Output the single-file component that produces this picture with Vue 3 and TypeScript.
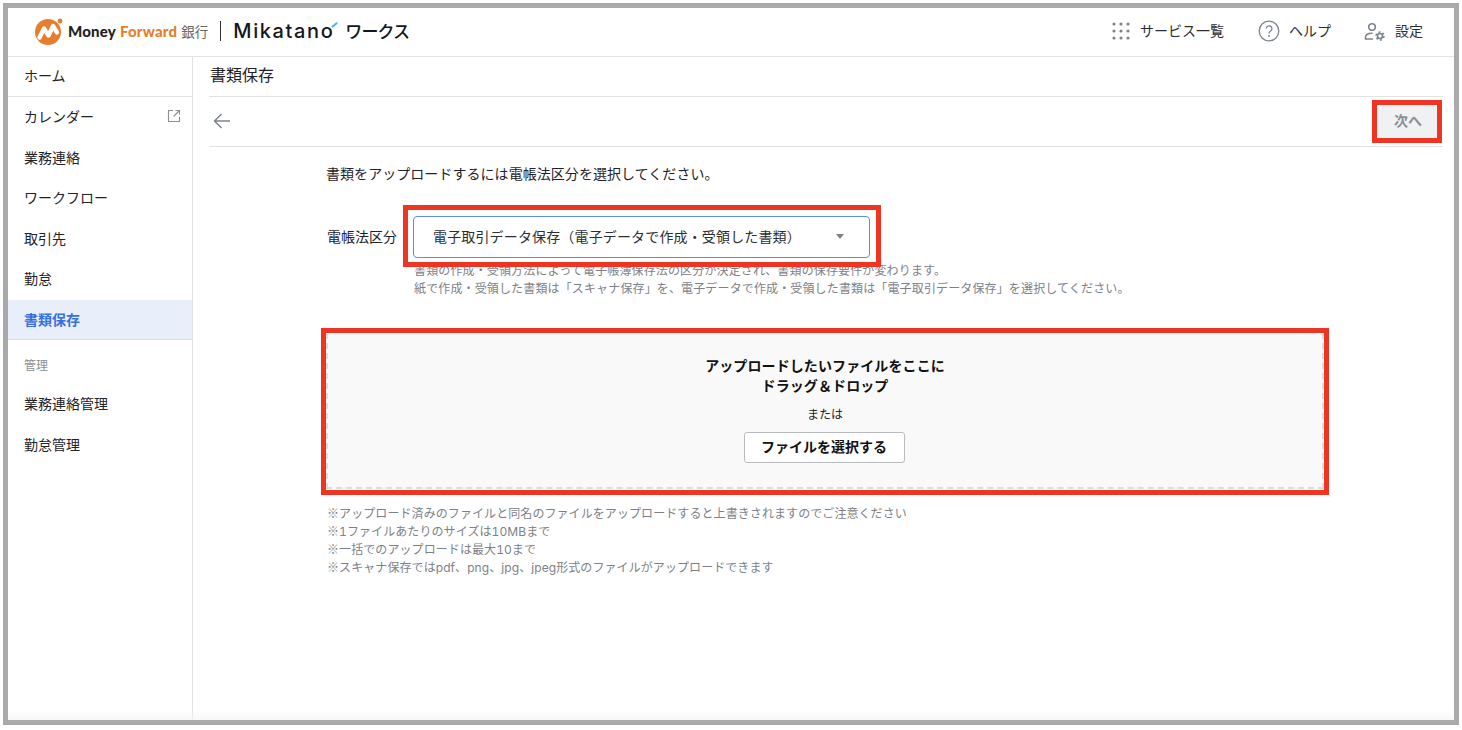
<script setup lang="ts">
interface NavItem { label: string; active?: boolean; external?: boolean }
const primary: NavItem[] = [
  { label: 'カレンダー', external: true },
  { label: '業務連絡' },
  { label: 'ワークフロー' },
  { label: '取引先' },
  { label: '勤怠' },
  { label: '書類保存', active: true },
]
const admin: NavItem[] = [{ label: '業務連絡管理' }, { label: '勤怠管理' }]
const notes: string[] = [
  'アップロード済みのファイルと同名のファイルをアップロードすると上書きされますのでご注意ください',
  '1ファイルあたりのサイズは10MBまで',
  '一括でのアップロードは最大10まで',
  'スキャナ保存ではpdf、png、jpg、jpeg形式のファイルがアップロードできます',
]
const dots: number[][] = [0, 1, 2].flatMap((r) => [0, 1, 2].map((c) => [c, r]))
</script>

<template>
  <div class="frame">
    <header class="header">
      <div class="brand">
        <svg class="mf-mark" width="30" height="28" viewBox="0 0 30 28">
          <circle cx="14" cy="15" r="13" fill="#e87d2e" />
          <circle cx="26" cy="4" r="2.4" fill="#e87d2e" />
          <path d="M5.500 20.500 L10 11.500 L14.500 18.500 L19 9 L23 15.500" fill="none" stroke="#fff" stroke-width="4.400" stroke-linejoin="round" stroke-linecap="round" />
        </svg>
        <span class="mf-money">Money</span>
        <span class="mf-forward">Forward</span>
        <span class="mf-bank">銀行</span>
        <span class="divider"></span>
        <span class="mikatano">Mikatano<i class="tick"></i></span>
        <span class="works">ワークス</span>
      </div>
      <nav class="tools">
        <a class="tool tool-services">
          <svg class="ico-services" width="18" height="18" viewBox="0 0 18 18">
            <circle v-for="d in dots" :key="d.join()" :cx="2 + d[0] * 7" :cy="2 + d[1] * 7" r="1.6" fill="#7d848c" />
          </svg>
          <span>サービス一覧</span>
        </a>
        <a class="tool tool-help">
          <svg class="ico-help" width="22" height="22" viewBox="0 0 22 22">
            <circle cx="11" cy="11" r="9.800" fill="none" stroke="#7d848c" stroke-width="1.300" />
            <path d="M8.300 8.600a2.800 2.800 0 1 1 4.300 2.400c-1 .7-1.600 1.200-1.600 2.400" fill="none" stroke="#7d848c" stroke-width="1.300" />
            <circle cx="11" cy="16" r=".9" fill="#7d848c" />
          </svg>
          <span>ヘルプ</span>
        </a>
        <a class="tool tool-settings">
          <svg width="22" height="20" viewBox="0 0 22 20">
            <circle cx="8" cy="5" r="3.300" fill="none" stroke="#7d848c" stroke-width="1.600" />
            <path d="M1.500 17v-1.500c0-2.800 3-4.300 6.500-4.300M1.500 17h7" fill="none" stroke="#7d848c" stroke-width="1.600" stroke-linecap="round" />
            <circle cx="16" cy="14" r="2.500" fill="none" stroke="#7d848c" stroke-width="1.700" />
            <circle cx="16" cy="14" r="4" fill="none" stroke="#7d848c" stroke-width="1.400" stroke-dasharray="2.100 2.090" />
          </svg>
          <span>設定</span>
        </a>
      </nav>
    </header>

    <div class="body">
      <aside class="sidebar">
        <div class="home">ホーム</div>
        <ul class="nav">
          <li v-for="item in primary" :key="item.label" class="nav-item" :class="{ active: item.active }">
            <span>{{ item.label }}</span>
            <svg v-if="item.external" width="14" height="14" viewBox="0 0 14 14" class="ext">
              <path d="M6 1.500H1.500V12.500H12.500V8M8.500 1.500H12.500V5.500M12.500 1.500L6.500 7.500" fill="none" stroke="#8a9097" stroke-width="1.100" />
            </svg>
          </li>
        </ul>
        <div class="nav-head">管理</div>
        <ul class="nav">
          <li v-for="item in admin" :key="item.label" class="nav-item">{{ item.label }}</li>
        </ul>
      </aside>

      <main class="main">
        <h1 class="title">書類保存</h1>
        <div class="toolbar">
          <svg width="18" height="16" viewBox="0 0 18 16" class="back">
            <path d="M17 8H1.500M8.500 1L1.500 8L8.500 15" fill="none" stroke="#7d848c" stroke-width="1.500" />
          </svg>
          <div class="next-mark"><button class="next" type="button">次へ</button></div>
        </div>

        <section class="content">
          <p class="lead">書類をアップロードするには電帳法区分を選択してください。</p>
          <div class="field">
            <label class="field-label">電帳法区分</label>
            <div class="select-mark">
              <div class="select">
                <span>電子取引データ保存（電子データで作成・受領した書類）</span>
                <i class="caret"></i>
              </div>
            </div>
          </div>
          <p class="help">
            書類の作成・受領方法によって電子帳簿保存法の区分が決定され、書類の保存要件が変わります。<br />
            紙で作成・受領した書類は「スキャナ保存」を、電子データで作成・受領した書類は「電子取引データ保存」を選択してください。
          </p>
          <div class="drop-mark">
            <div class="drop">
              <p class="drop-title">アップロードしたいファイルをここに<br />ドラッグ＆ドロップ</p>
              <p class="drop-or">または</p>
              <button class="pick" type="button">ファイルを選択する</button>
            </div>
          </div>
          <ul class="notes">
            <li v-for="n in notes" :key="n"><span class="kome">※</span>{{ n }}</li>
          </ul>
        </section>
      </main>
    </div>
    <div class="bottom-fade"></div>
  </div>
</template>

<style>
html, body { margin: 0; background: #fff; }
</style>

<style scoped>
.frame {
  position: relative;
  box-sizing: border-box;
  width: 1456px;
  height: 722px;
  margin: 3px 0 0 3px;
  border: 5px solid #aaaaaa;
  display: flex;
  flex-direction: column;
  overflow: hidden;
  color: #1f2226;
  font-family: "Noto Sans CJK JP", "Noto Sans", sans-serif;
  font-size: 14px;
  background: #fff;
}
.header {
  flex: none;
  box-sizing: border-box;
  height: 49px;
  border-bottom: 1px solid #e2e4e6;
  display: flex;
  align-items: center;
  justify-content: space-between;
  padding: 0 30px 0 26px;
}
.brand { display: flex; align-items: center; height: 100%; }
.mf-mark { margin-top: -2px; }
.mf-money, .mf-forward {
  font-family: Lato, "Noto Sans", sans-serif;
  font-weight: 900;
  font-size: 15px;
  letter-spacing: .2px;
  margin-bottom: 3px;
}
.mf-money { margin-left: 4px; color: #222; }
.mf-forward { margin-left: 4px; color: #e87d2e; }
.mf-bank { margin-left: 4px; margin-bottom: 3px; font-size: 13.500px; color: #666; }
.divider { width: 1px; height: 20px; background: #333; margin: 0 12px 3px; }
.mikatano {
  position: relative;
  font-family: Inter, sans-serif;
  font-weight: 500;
  font-size: 20px;
  letter-spacing: 1.600px;
  color: #14171a;
  margin-bottom: 2px;
}
.tick {
  position: absolute;
  right: -4px;
  top: 5px;
  width: 7px;
  height: 2px;
  background: #4bb4ee;
  transform: rotate(-40deg);
}
.works { margin-left: 11px; margin-bottom: 4px; font-size: 17px; font-weight: 500; letter-spacing: -.9px; color: #14171a; }
.tools { display: flex; align-items: center; }
.tool { display: flex; align-items: center; gap: 10px; color: #2b2e32; }
.tool span { margin-bottom: 4px; }
.ico-services, .ico-help { margin-bottom: 2px; }
.tool-services { gap: 10px; }
.tool-help { margin-left: 34px; gap: 9px; }
.tool-settings { margin-left: 33px; gap: 9px; margin-right: 1px; }

.body { flex: 1; display: flex; min-height: 0; }
.sidebar {
  flex: none;
  box-sizing: border-box;
  width: 185px;
  border-right: 1px solid #e0e2e4;
}
.home {
  box-sizing: border-box;
  height: 40px;
  line-height: 36px;
  padding-left: 16px;
  border-bottom: 1px solid #e0e2e4;
}
.nav { list-style: none; margin: 0; padding: 0; }
.nav-item {
  box-sizing: border-box;
  height: 40.500px;
  display: flex;
  align-items: center;
  justify-content: space-between;
  padding: 0 11px 2px 16px;
}
.nav-item.active {
  background: #e8effb;
  color: #3570e0;
  font-weight: 700;
  border-bottom: 1px solid #d8dde3;
  padding-bottom: 0;
}
.nav-head { height: 44px; line-height: 49px; padding-left: 16px; font-size: 12px; color: #8b8f95; box-sizing: border-box; }

.main { flex: 1; min-width: 0; padding: 0 11px 0 16px; }
.title {
  margin: 0;
  box-sizing: border-box;
  height: 40px;
  line-height: 35px;
  padding-left: 1px;
  font-size: 16px;
  font-weight: 400;
  border-bottom: 1px solid #e0e2e4;
}
.toolbar {
  box-sizing: border-box;
  height: 50px;
  border-bottom: 1px solid #e0e2e4;
  display: flex;
  align-items: center;
  justify-content: space-between;
  padding-left: 4px;
  position: relative;
}
.back { margin-bottom: 2px; }
.next-mark { border: 5px solid #ee3524; margin-right: 1px; line-height: 0; }
.next {
  width: 60px;
  height: 33px;
  border: 0;
  padding: 0 0 4px 2px;
  background: #f0f1f3;
  color: #8a8e94;
  font: 700 14px "Noto Sans CJK JP", sans-serif;
}
.content { padding: 16px 0 0 118px; }
.lead { margin: 0 0 0 -1px; line-height: 21px; letter-spacing: .05px; }
.field { display: flex; align-items: center; margin-top: 21px; position: relative; z-index: 1; }
.field-label { width: 76px; }
.select-mark { border: 5px solid #ee3524; padding: 6px 6px 4px 5px; background: #fff; }
.select {
  box-sizing: border-box;
  width: 457px;
  height: 42px;
  border: 1px solid #5b8fe6;
  border-radius: 4px;
  display: flex;
  align-items: center;
  justify-content: space-between;
  padding: 0 25px 2px 19px;
  letter-spacing: .15px;
  color: #2b2e32;
}
.caret {
  width: 0;
  height: 0;
  border-left: 4.500px solid transparent;
  border-right: 4.500px solid transparent;
  border-top: 5px solid #7d848c;
}
.help { margin: -6px 0 0 87px; font-size: 12px; line-height: 18px; letter-spacing: .14px; color: #7d8187; }
.drop-mark { border: 5px solid #ee3524; margin: 31px 0 0 -6px; width: 998px; box-sizing: content-box; padding-bottom: 1px; }
.drop {
  box-sizing: border-box;
  height: 156px;
  background: #f9f9f9;
  border: 2px dashed #dcdede;
  border-top-color: transparent;
  text-align: center;
  padding-top: 20px;
}
.drop-title { margin: 0; font-weight: 700; line-height: 20px; letter-spacing: .1px; color: #111; }
.drop-or { margin: 11px 0 0; font-size: 12px; line-height: 16px; }
.pick {
  box-sizing: border-box;
  width: 161px;
  height: 31px;
  margin: 10px 2px 0 0;
  padding: 0 0 3px;
  background: #fff;
  border: 1px solid #b9bcbf;
  border-radius: 3px;
  color: #111;
  font: 700 14px "Noto Sans CJK JP", sans-serif;
}
.notes { list-style: none; margin: 10px 0 0; padding: 0; font-family: Inter, "Noto Sans CJK JP", sans-serif; font-feature-settings: "tnum"; font-size: 12px; line-height: 18px; letter-spacing: .08px; color: #7d8187; }
.notes li { height: 18px; }
.kome { font-family: "Noto Sans CJK JP", sans-serif; line-height: 0; }
.bottom-fade {
  position: absolute;
  left: 0;
  right: 0;
  bottom: 0;
  height: 10px;
  background: linear-gradient(to bottom, rgba(245,245,245,0), rgba(245,245,245,.7));
  pointer-events: none;
}
</style>
